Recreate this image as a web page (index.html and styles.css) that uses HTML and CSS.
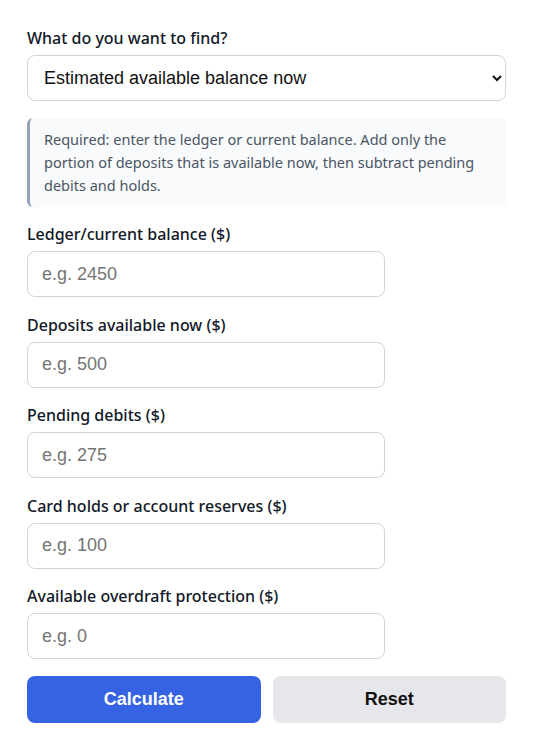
FILE: index.html
```html
<!DOCTYPE html>
<html lang="en">
<head>
  <meta charset="UTF-8">
  <title>Available Balance Calculator</title>
  <meta name="viewport" content="width=device-width, initial-scale=1">
  <link rel="stylesheet" href="styles.css">
</head>
<body>
  <div class="calc">
    <div class="field">
      <label for="mode">What do you want to find?</label>
      <select id="mode">
        <option value="available" selected>Estimated available balance now</option>
        <option value="ledger">Ledger balance</option>
      </select>
    </div>

    <div class="note">
      Required: enter the ledger or current balance. Add only the portion of deposits that is available now, then subtract pending debits and holds.
    </div>

    <div class="field">
      <label for="ledger">Ledger/current balance ($)</label>
      <input type="number" id="ledger" placeholder="e.g. 2450">
    </div>
    <div class="field">
      <label for="deposits">Deposits available now ($)</label>
      <input type="number" id="deposits" placeholder="e.g. 500">
    </div>
    <div class="field">
      <label for="pending">Pending debits ($)</label>
      <input type="number" id="pending" placeholder="e.g. 275">
    </div>
    <div class="field">
      <label for="holds">Card holds or account reserves ($)</label>
      <input type="number" id="holds" placeholder="e.g. 100">
    </div>
    <div class="field">
      <label for="overdraft">Available overdraft protection ($)</label>
      <input type="number" id="overdraft" placeholder="e.g. 0">
    </div>

    <div class="actions">
      <button type="button" class="btn primary">Calculate</button>
      <button type="button" class="btn secondary">Reset</button>
    </div>
  </div>
</body>
</html>
```

FILE: styles.css
```css
/* base */
body {
  margin: 0;
  padding: 0;
  background: #fff;
  color: #111827;
  font-family: 'Noto Sans', 'Open Sans', sans-serif;
}
.calc {
  width: 479px;
  padding: 27px 27px;
  box-sizing: content-box;
}
.field {
  display: flex;
  flex-direction: column;
  margin-bottom: 16.5px;
}
label {
  font-size: 16px;
  font-weight: 500;
  line-height: 22px;
  margin-bottom: 6px;
  color: #111827;
}
select, input {
  font-family: 'Liberation Sans', Arial, sans-serif;
  font-size: 18px;
  color: #111;
  border: 1px solid #d1d5db;
  border-radius: 8px;
  background: #fff;
  box-sizing: border-box;
  height: 46px;
}
select {
  width: 100%;
  padding: 0 12px;
}
input {
  width: 358px;
  padding: 0 14px;
}
input::placeholder {
  color: #757575;
}
/* hint box */
.note {
  background: #f8fafc;
  border-left: 3px solid #94a3b8;
  border-radius: 6px;
  padding: 10px 14px 10px 14px;
  font-size: 14.5px;
  line-height: 23px;
  color: #4b5563;
  margin-bottom: 16.5px;
}
.actions {
  display: flex;
  gap: 12px;
}
.btn {
  flex: 1;
  height: 47px;
  border: none;
  border-radius: 8px;
  font-family: 'Liberation Sans', Arial, sans-serif;
  font-size: 18px;
  font-weight: 700;
  cursor: pointer;
}
.primary {
  background: #3563e3;
  color: #fff;
}
.secondary {
  background: #e5e7eb;
  color: #111;
}
```
